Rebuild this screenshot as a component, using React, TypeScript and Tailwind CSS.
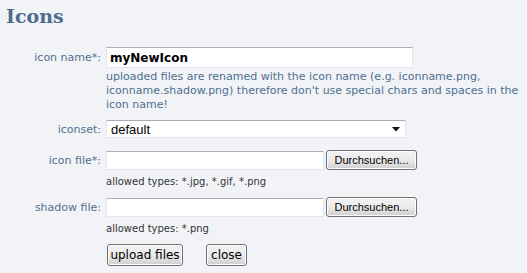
import React from "react";

const label = "text-[11px] text-[#51708f] text-right leading-none";
const field = "bg-white border border-[#e2e5ea] border-t-[#abadb3] border-l-[#e2e5ea]";
const winBtn =
  "border border-[#707070] rounded-[3px] bg-gradient-to-b from-[#f2f2f2] via-[#ebebeb] to-[#cfcfcf] shadow-[inset_0_0_0_1px_#fcfcfc] text-black";

function FileRow({ name, hint }: { name: string; hint: string }) {
  return (
    <div className="flex flex-col">
      <div className="flex items-center">
        <span className={`${label} w-[101px] shrink-0`}>{name}</span>
        <div className={`${field} ml-[5px] w-[218px] h-[19px]`} />
        <button
          type="button"
          className={`${winBtn} ml-[2px] w-[91px] h-[20px] text-[11px] font-['Liberation_Sans',sans-serif] leading-none`}
        >
          Durchsuchen...
        </button>
      </div>
      <p className="ml-[106px] mt-[6px] text-[10px] text-[#333] leading-[12px]">{hint}</p>
    </div>
  );
}

export default function App() {
  return (
    <div className="w-[527px] h-[273px] bg-[#f1f3f7] overflow-hidden font-['DejaVu_Sans',Verdana,sans-serif]">
      <h1 className="pl-[6px] pt-[4px] text-[19px] leading-[24px] font-bold text-[#4e6d8d] font-['DejaVu_Serif',serif]">
        Icons
      </h1>

      <div className="mt-[19px] flex flex-col">
        <div className="flex items-center">
          <span className={`${label} w-[101px] shrink-0`}>icon name*:</span>
          <div className={`${field} ml-[5px] w-[307px] h-[21px] flex items-center px-[3px]`}>
            <span className="text-[12px] font-bold text-black leading-none">myNewIcon</span>
          </div>
        </div>
        <p className="ml-[106px] mt-[2px] w-[420px] text-[11px] leading-[14px] text-[#4e6f8f]">
          uploaded files are renamed with the icon name (e.g. iconname.png, iconname.shadow.png) therefore don't use
          special chars and spaces in the icon name!
        </p>

        <div className="flex items-center mt-[8px]">
          <span className={`${label} w-[101px] shrink-0`}>iconset:</span>
          <div className={`${field} ml-[5px] w-[300px] h-[18px] flex items-center justify-between pl-[4px] pr-[5px]`}>
            <span className="text-[13px] text-black leading-none font-['Liberation_Sans',sans-serif]">default</span>
            <svg width="8" height="5" viewBox="0 0 8 5">
              <path d="M0 0h8L4 4.5z" fill="#111" />
            </svg>
          </div>
        </div>

        <div className="mt-[12px]">
          <FileRow name="icon file*:" hint="allowed types: *.jpg, *.gif, *.png" />
        </div>
        <div className="mt-[9px]">
          <FileRow name="shadow file:" hint="allowed types: *.png" />
        </div>

        <div className="flex ml-[107px] mt-[9px] gap-[23px]">
          <button type="button" className={`${winBtn} w-[76px] h-[22px] text-[12px] leading-none`}>
            upload files
          </button>
          <button type="button" className={`${winBtn} w-[41px] h-[22px] text-[12px] leading-none`}>
            close
          </button>
        </div>
      </div>
    </div>
  );
}
